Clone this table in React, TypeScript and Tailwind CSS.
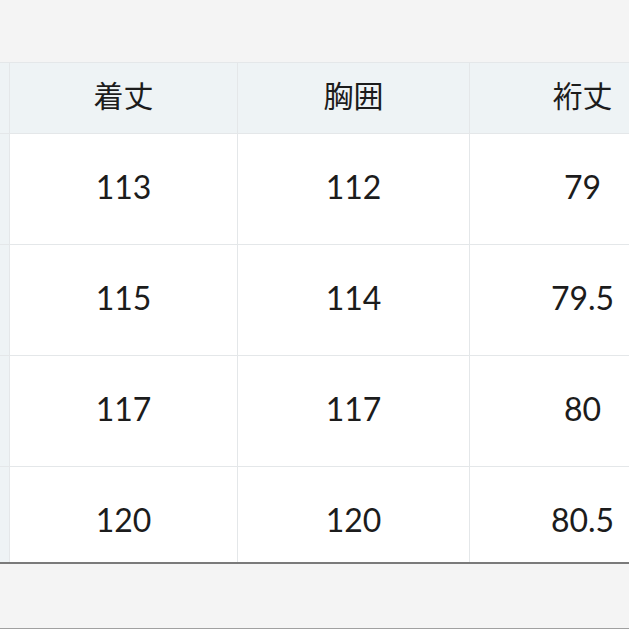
const header = ["着丈", "胸囲", "裄丈"];
const rows = [
  ["113", "112", "79"],
  ["115", "114", "79.5"],
  ["117", "117", "80"],
  ["120", "120", "80.5"],
];

export default function App() {
  return (
    <div
      className="flex h-[629px] w-[629px] flex-col overflow-hidden bg-[#f4f4f4] text-[#1c1c1c]"
      style={{ fontFamily: "Lato, 'Noto Sans CJK JP', sans-serif" }}
    >
      <div className="h-[62px] shrink-0 bg-[#f4f4f4]" />
      <div className="h-[500px] shrink-0 overflow-hidden">
        <div className="grid w-[700px] grid-cols-[10px_228px_232px_226px] border-t border-[#e4e7e9] bg-white">
          <div className="h-[71px] border-r border-b border-[#e4e7e9] bg-[#eef3f5]" />
          {header.map((h) => (
            <div
              key={h}
              className="flex h-[71px] items-center justify-center border-r border-b border-[#e4e7e9] bg-[#eef3f5] pb-[6px] text-[30px]"
            >
              {h}
            </div>
          ))}
          {rows.map((r, i) => (
            <Row key={i} cells={r} />
          ))}
        </div>
      </div>
      <div className="flex-1 border-t-2 border-b border-t-[#7a7a7a] border-b-[#a0a0a0] bg-[#f4f4f4]" />
    </div>
  );
}

function Row({ cells }: { cells: string[] }) {
  return (
    <>
      <div className="h-[111px] border-r border-b border-[#e4e7e9] bg-[#eef3f5]" />
      {cells.map((c, j) => (
        <div
          key={j}
          className="flex h-[111px] items-center justify-center border-r border-b border-[#e4e7e9] pb-[5px] text-[32px]"
        >
          {c}
        </div>
      ))}
    </>
  );
}
